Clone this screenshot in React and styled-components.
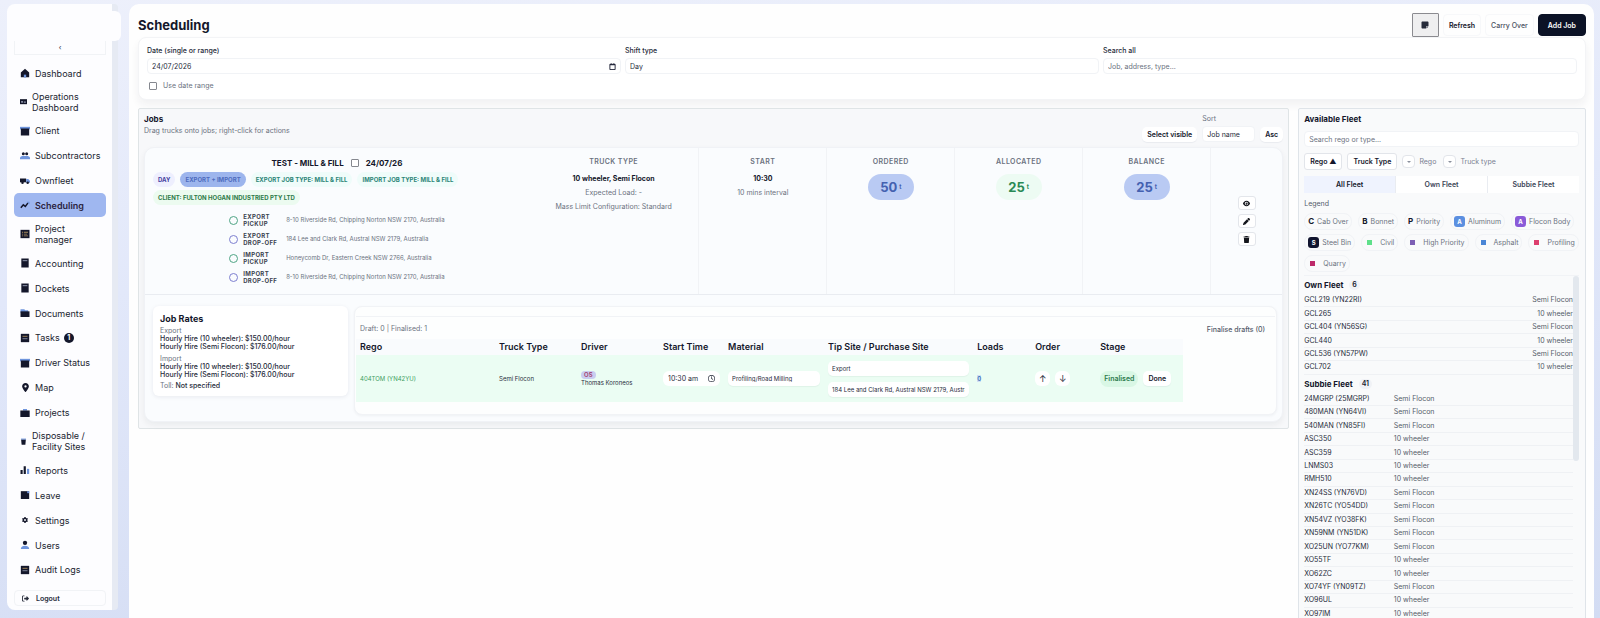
import React, { useState } from 'react';
import styled, { createGlobalStyle } from 'styled-components';
import { FaEye, FaPen, FaTrash, FaRightFromBracket, FaNoteSticky, FaRegClock, FaLocationDot, FaGear } from 'react-icons/fa6';

const COLORS = {
  ink: '#14172b',
  text: '#262b3a',
  muted: '#6b7280',
  accent: '#6f95dd',
  line: '#e9ecf1',
  lineSoft: '#f1f3f6',
  white: '#ffffff',
};

/* sidebar glyphs: each one is drawn on a 12 x 12 grid */
const GLYPHS = {
  home: <><path d="M6 1 11 5.4V11H1V5.4Z" /><path className="soft" d="M4.6 8h2.8v3.4H4.6Z" /></>,
  card: <><path d="M0 2h12v8.6H0Z" /><path className="pale" d="M2 5h3v3H2ZM6.5 5H10v1H6.5ZM6.5 7H10v1H6.5Z" /></>,
  store: <><path className="soft" d="M0 1h12v3H0Z" /><path d="M1 3h10v8.4H1Z" /></>,
  group: <><circle cx="4" cy="3.4" r="1.8" /><circle cx="8" cy="3.4" r="1.8" /><path className="soft" d="M0 8.4C0 6.6 2 6 4 6h4c2 0 4 .6 4 2.4V10H0Z" /></>,
  truck: <><path d="M0 3h7.4v4.6H0Z" /><path className="soft" d="M7.4 3.6H10L12 6V8H7.4Z" /><circle cx="3" cy="8.2" r="1.5" /><circle cx="9.2" cy="8.2" r="1.5" /></>,
  trend: <><path className="line" d="M1 9.4 4 5.8 6.4 7.6 9.6 3.4" /><path className="soft" d="M8 2h3.4v3.4Z" /></>,
  list: <><path d="M.6 1h10.8v10H.6Z" /><path className="gold" d="M2.4 3.4h1.2v1H2.4ZM4.6 3.4h5v1h-5ZM2.4 5.6h1.2v1H2.4ZM4.6 5.6h4v1h-4ZM2.4 7.8h1.2v1H2.4ZM4.6 7.8h5v1h-5Z" /></>,
  book: <><path d="M1.6.6h8.8v10.8H1.6Z" /><path className="pale" d="M3.2 2.6h5.6v1.2H3.2Z" /></>,
  folder: <><path className="soft" d="M.6 1.4h4.6l1 1.4h3.6v3H.6Z" /><path d="M.6 4h10.8v6.8H.6Z" /></>,
  tasks: <><path d="M1 1h10v10H1Z" /><path className="gold" d="M3 3.4h6v1.1H3Z" /><path className="pale" d="M3 6.4h6v1H3Z" /></>,
  case: <><path className="soft" d="M3.6 1.2h4.8v2H3.6Z" /><path d="M.4 3h11.2v7.8H.4Z" /></>,
  bin: <><path className="soft" d="M1.6 1h8.8v2H1.6Z" /><path d="M2 3h8l-.8 8.4H2.8Z" /></>,
  bars: <><path d="M.6 6h2.6v4.8H.6ZM4.4 1.4H7v9.4H4.4Z" /><path className="soft" d="M8.4 4.6H11v6.2H8.4Z" /></>,
  leave: <><path d="M1 1.4h10v9.4H1Z" /><path className="soft" d="M8.6 1.4H11v2.4H8.6Z" /></>,
  user: <><circle cx="6" cy="3.4" r="2.6" /><path className="soft" d="M1 10.8C1 8 3.4 7 6 7s5 1 5 3.8Z" /></>,
};

const Glyph = ({ name, size = 10 }) => (
  <GlyphSvg viewBox="0 0 12 12" width={size} height={size} aria-hidden="true">{GLYPHS[name]}</GlyphSvg>
);

const NAV = [
  { label: 'Dashboard', icon: 'home' },
  { label: 'Operations Dashboard', icon: 'card', wrap: true },
  { label: 'Client', icon: 'store' },
  { label: 'Subcontractors', icon: 'group' },
  { label: 'Ownfleet', icon: 'truck' },
  { label: 'Scheduling', icon: 'trend', active: true },
  { label: 'Project manager', icon: 'list' },
  { label: 'Accounting', icon: 'book' },
  { label: 'Dockets', icon: 'book' },
  { label: 'Documents', icon: 'folder' },
  { label: 'Tasks', icon: 'tasks', count: 1 },
  { label: 'Driver Status', icon: 'store' },
  { label: 'Map', icon: 'pin' },
  { label: 'Projects', icon: 'case' },
  { label: 'Disposable / Facility Sites', icon: 'bin', wrap: true },
  { label: 'Reports', icon: 'bars' },
  { label: 'Leave', icon: 'leave' },
  { label: 'Settings', icon: 'gear' },
  { label: 'Users', icon: 'user' },
  { label: 'Audit Logs', icon: 'tasks' },
];

const STOPS = [
  { type: 'Export', kind: 'Pickup', address: '8-10 Riverside Rd, Chipping Norton NSW 2170, Australia' },
  { type: 'Export', kind: 'Drop-off', address: '184 Lee and Clark Rd, Austral NSW 2179, Australia' },
  { type: 'Import', kind: 'Pickup', address: 'Honeycomb Dr, Eastern Creek NSW 2766, Australia' },
  { type: 'Import', kind: 'Drop-off', address: '8-10 Riverside Rd, Chipping Norton NSW 2170, Australia' },
];

const QUANTITIES = [
  { label: 'Ordered', value: 50, tone: 'blue' },
  { label: 'Allocated', value: 25, tone: 'green' },
  { label: 'Balance', value: 25, tone: 'blue' },
];

/* column name and its relative width */
const ALLOCATION_COLUMNS = [
  ['Rego', 139], ['Truck Type', 82], ['Driver', 82], ['Start Time', 65], ['Material', 100],
  ['Tip Site / Purchase Site', 149], ['Loads', 58], ['Order', 65], ['Stage', 87],
];
const ALLOCATION_TOTAL = ALLOCATION_COLUMNS.reduce((sum, [, width]) => sum + width, 0);

const LEGEND = [
  { letter: 'C', label: 'Cab Over' },
  { letter: 'B', label: 'Bonnet' },
  { letter: 'P', label: 'Priority' },
  { letter: 'A', label: 'Aluminum', fill: '#5b8fe0' },
  { letter: 'A', label: 'Flocon Body', fill: '#8a5ad8' },
  { letter: 'S', label: 'Steel Bin', fill: '#11152f' },
  { dot: '#5fe08a', label: 'Civil' },
  { dot: '#7d5fb4', label: 'High Priority' },
  { dot: '#4a86d6', label: 'Asphalt' },
  { dot: '#dd3f6e', label: 'Profiling' },
  { dot: '#bd2a6a', label: 'Quarry' },
];

const SEMI = 'Semi Flocon';
const TEN = '10 wheeler';

const OWN_FLEET = [
  ['GCL219 (YN22RI)', SEMI], ['GCL265', TEN], ['GCL404 (YN56SG)', SEMI],
  ['GCL440', TEN], ['GCL536 (YN57PW)', SEMI], ['GCL702', TEN],
];

const SUBBIE_FLEET = [
  ['24MGRP (25MGRP)', SEMI], ['480MAN (YN64VI)', SEMI], ['540MAN (YN85FI)', SEMI],
  ['ASC350', TEN], ['ASC359', TEN], ['LNMS03', TEN], ['RMH510', TEN],
  ['XN24SS (YN76VD)', SEMI], ['XN26TC (YO54DD)', SEMI], ['XN54VZ (YO38FK)', SEMI],
  ['XN59NM (YN51DK)', SEMI], ['XO25UN (YO77KM)', SEMI], ['XO55TF', TEN], ['XO62ZC', TEN],
  ['XO74YF (YN09TZ)', SEMI], ['XO96UL', TEN], ['XO97IM', TEN],
];

const navIcon = (item) => {
  if (item.icon === 'pin') return <FaLocationDot size={9} />;
  if (item.icon === 'gear') return <FaGear size={6} />;
  return <Glyph name={item.icon} size={item.wrap ? 7 : 10} />;
};

const Sidebar = () => (
  <Side>
    <SideBody>
      <Brand />
      <CollapseButton aria-label="Collapse menu">‹</CollapseButton>
      <Nav>
        {NAV.map((item) => (
          <NavLink key={item.label} href="#" $active={item.active}>
            <NavIcon $tight={item.wrap}>{navIcon(item)}</NavIcon>
            <span>{item.label}</span>
            {item.count && <NavCount>{item.count}</NavCount>}
          </NavLink>
        ))}
      </Nav>
      <LogoutButton><FaRightFromBracket size={7} />Logout</LogoutButton>
    </SideBody>
    <SideTrack />
  </Side>
);

const Filters = () => (
  <FilterCard>
    <Field>
      <FieldLabel htmlFor="date">Date (single or range)</FieldLabel>
      <InputBox>
        <BareInput id="date" defaultValue="24/07/2026" />
        <CalendarIcon viewBox="0 0 8 8" aria-hidden="true">
          <path d="M1 1.5h6v6H1Z" /><path d="M1 2h6M2.5.4v1.2M5.5.4v1.2" />
        </CalendarIcon>
      </InputBox>
      <CheckLabel><Check type="checkbox" />Use date range</CheckLabel>
    </Field>
    <Field>
      <FieldLabel htmlFor="shift">Shift type</FieldLabel>
      <Select id="shift"><option>Day</option><option>Night</option></Select>
    </Field>
    <Field>
      <FieldLabel htmlFor="search">Search all</FieldLabel>
      <Input id="search" placeholder="Job, address, type..." />
    </Field>
  </FilterCard>
);

const JobSummary = () => (
  <SummaryGrid>
    <JobCell>
      <JobTitle>
        <strong>TEST - MILL &amp; FILL</strong>
        <Check type="checkbox" aria-label="Select job" />
        <strong>24/07/26</strong>
      </JobTitle>
      <Pills>
        <Pill $bg="#eeeffe" $color="#4540a0">Day</Pill>
        <Pill $bg="#9db5ed" $color="#4d6bbd">Export + Import</Pill>
        <Pill $bg="#effcfa" $color="#2b8577">Export job type: Mill &amp; Fill</Pill>
        <Pill $bg="#effcfa" $color="#2b8577">Import job type: Mill &amp; Fill</Pill>
        <Pill $bg="#ecfbf0" $color="#2c7a48">Client: Fulton Hogan Industried Pty Ltd</Pill>
      </Pills>
      <Stops>
        {STOPS.map((stop, i) => (
          <Stop key={i}>
            <StopRing $drop={stop.kind === 'Drop-off'} />
            <StopLabel>{stop.type}<br />{stop.kind}</StopLabel>
            <StopAddress>{stop.address}</StopAddress>
          </Stop>
        ))}
      </Stops>
    </JobCell>
    <Cell>
      <CellHead>Truck Type</CellHead>
      <CellValue>10 wheeler, Semi Flocon</CellValue>
      <CellNote>Expected Load: -</CellNote>
      <CellNote>Mass Limit Configuration: Standard</CellNote>
    </Cell>
    <Cell>
      <CellHead>Start</CellHead>
      <CellValue>10:30</CellValue>
      <CellNote>10 mins interval</CellNote>
    </Cell>
    {QUANTITIES.map((q) => (
      <Cell key={q.label}>
        <CellHead>{q.label}</CellHead>
        <Quantity $tone={q.tone}>{q.value}<small>t</small></Quantity>
      </Cell>
    ))}
    <ActionCell>
      <IconButton aria-label="View job"><FaEye size={7} /></IconButton>
      <IconButton aria-label="Edit job"><FaPen size={7} /></IconButton>
      <IconButton aria-label="Delete job"><FaTrash size={7} /></IconButton>
    </ActionCell>
  </SummaryGrid>
);

const JobRates = () => (
  <RatesCard>
    <RatesTitle>Job Rates</RatesTitle>
    {['Export', 'Import'].map((type) => (
      <RateGroup key={type}>
        <RateType>{type}</RateType>
        <RateLine>Hourly Hire (10 wheeler): $150.00/hour</RateLine>
        <RateLine>Hourly Hire (Semi Flocon): $176.00/hour</RateLine>
      </RateGroup>
    ))}
    <RateLine><RateMuted>Toll:</RateMuted> Not specified</RateLine>
  </RatesCard>
);

const Allocations = () => (
  <AllocationCard>
    <AllocationBar>
      <span>Draft: 0 | Finalised: 1</span>
      <TextButton>Finalise drafts (0)</TextButton>
    </AllocationBar>
    <AllocationTable>
      <colgroup>
        {ALLOCATION_COLUMNS.map(([name, width]) => (
          <col key={name} style={{ width: `${(width / ALLOCATION_TOTAL) * 100}%` }} />
        ))}
      </colgroup>
      <thead>
        <tr>{ALLOCATION_COLUMNS.map(([name]) => <th key={name}>{name}</th>)}</tr>
      </thead>
      <tbody>
        <tr>
          <td><Rego>404TOM (YN42YU)</Rego></td>
          <td>Semi Flocon</td>
          <td><DriverTag>OS</DriverTag><div>Thomas Koroneos</div></td>
          <td>
            <TimeBox>
              <BareInput aria-label="Start time" defaultValue="10:30 am" />
              <FaRegClock size={7} />
            </TimeBox>
          </td>
          <td><RowSelect aria-label="Material"><option>Profiling/Road Milling</option></RowSelect></td>
          <td>
            <SiteStack>
              <RowSelect aria-label="Direction"><option>Export</option></RowSelect>
              <RowSelect aria-label="Tip site"><option>184 Lee and Clark Rd, Austral NSW 2179, Australia</option></RowSelect>
            </SiteStack>
          </td>
          <td><Loads href="#">0</Loads></td>
          <td>
            <Inline>
              <RoundButton aria-label="Move up">↑</RoundButton>
              <RoundButton aria-label="Move down">↓</RoundButton>
            </Inline>
          </td>
          <td>
            <Inline>
              <StageTag>Finalised</StageTag>
              <SmallButton>Done</SmallButton>
            </Inline>
          </td>
        </tr>
      </tbody>
    </AllocationTable>
  </AllocationCard>
);

const FleetRows = ({ rows, spread }) => (
  <FleetTable $count={rows.length}>
    <tbody>
      {rows.map(([rego, type]) => (
        <FleetRow key={rego} $spread={spread}><td>{rego}</td><td>{type}</td></FleetRow>
      ))}
    </tbody>
  </FleetTable>
);

const Fleet = () => {
  const [tab, setTab] = useState('All Fleet');

  return (
    <FleetPanel>
      <PanelTitle>Available Fleet</PanelTitle>
      <FleetSearch aria-label="Search fleet" placeholder="Search rego or type..." />
      <FleetSort>
        <OutlineButton>Rego ▲</OutlineButton>
        <OutlineButton>Truck Type</OutlineButton>
        <ToggleLabel><ToggleButton aria-label="Filter rego"><Caret /></ToggleButton>Rego</ToggleLabel>
        <ToggleLabel><ToggleButton aria-label="Filter truck type"><Caret /></ToggleButton>Truck type</ToggleLabel>
      </FleetSort>
      <Tabs>
        {['All Fleet', 'Own Fleet', 'Subbie Fleet'].map((name) => (
          <Tab key={name} $active={tab === name} onClick={() => setTab(name)}>{name}</Tab>
        ))}
      </Tabs>
      <LegendTitle>Legend</LegendTitle>
      <LegendList>
        {LEGEND.map((item) => (
          <LegendItem key={item.label}>
            {item.dot && <LegendDot $fill={item.dot} />}
            {item.letter && <LegendLetter $fill={item.fill}>{item.letter}</LegendLetter>}
            {item.label}
          </LegendItem>
        ))}
      </LegendList>
      <FleetScroll>
        <FleetLists>
          <FleetHeading>Own Fleet <FleetCount>6</FleetCount></FleetHeading>
          <FleetRows rows={OWN_FLEET} spread />
          <FleetHeading>Subbie Fleet <FleetCount>41</FleetCount></FleetHeading>
          <FleetRows rows={SUBBIE_FLEET} />
        </FleetLists>
        <ScrollThumb />
      </FleetScroll>
    </FleetPanel>
  );
};

const App = () => (
  <>
    <GlobalStyle />
    <Shell>
      <Sidebar />
      <Main>
        <TopBar>
          <Title>Scheduling</Title>
          <NoteButton aria-label="Notes"><FaNoteSticky size={8} /></NoteButton>
          <TopButton>Refresh</TopButton>
          <TopButton $light>Carry Over</TopButton>
          <TopButton $primary>Add Job</TopButton>
        </TopBar>
        <Filters />
        <Board>
          <JobsPanel>
            <JobsHeader>
              <div>
                <PanelTitle>Jobs</PanelTitle>
                <PanelNote>Drag trucks onto jobs; right-click for actions</PanelNote>
              </div>
              <JobsTools>
                <SmallButton>Select visible</SmallButton>
                <SortField>
                  <label htmlFor="sort">Sort</label>
                  <SortSelect id="sort"><option>Job name</option></SortSelect>
                </SortField>
                <SmallButton>Asc</SmallButton>
              </JobsTools>
            </JobsHeader>
            <JobCard>
              <JobSummary />
              <JobDetail>
                <JobRates />
                <Allocations />
              </JobDetail>
            </JobCard>
          </JobsPanel>
          <Fleet />
        </Board>
      </Main>
    </Shell>
  </>
);

const GlobalStyle = createGlobalStyle`
* {
box-sizing: border-box;
}
body {
margin: 0;
overflow: hidden;
font-family: Inter, "Liberation Sans", sans-serif;
font-size: 7px;
line-height: 10px;
color: ${COLORS.text};
background: linear-gradient(175deg, #edf0fb 0%, #e2e8fa 40%, #d3dcf3 100%);
}
button, input, select {
font-family: inherit;
font-size: 7px;
color: inherit;
}
a {
color: inherit;
text-decoration: none;
}
`
const Shell = styled.div`
display: flex;
gap: 8px;
height: 100vh;
padding: 4px 6px 0 7px;
`
const Side = styled.aside`
display: flex;
flex: none;
width: 114px;
margin-bottom: 8px;
`
const SideBody = styled.div`
display: flex;
flex-direction: column;
width: 105px;
padding: 7px 6px 4px 7px;
background-color: #fdfdff;
border-radius: 8px 0 0 8px;
`
const SideTrack = styled.div`
width: 6px;
background-color: #e6eaf3;
border-radius: 0 4px 4px 0;
`
/* the logo plate lies over the scroll track */
const Brand = styled.div`
position: relative;
flex: none;
width: 114px;
height: 30px;
margin-left: -7px;
background-color: #fdfdff;
border-radius: 0 6px 6px 0;
`
const CollapseButton = styled.button`
flex: none;
height: 14px;
margin-bottom: 6px;
padding: 0;
line-height: 12px;
background: none;
border: 1px solid ${COLORS.lineSoft};
border-top: none;
`
const Nav = styled.nav`
display: flex;
flex: 1;
flex-direction: column;
justify-content: space-between;
`
const NavLink = styled.a`
display: flex;
align-items: center;
gap: 5px;
min-height: 24px;
padding: 5px 6px;
font-size: 9px;
line-height: 11px;
font-weight: ${props => (props.$active ? 600 : 400)};
color: ${props => (props.$active ? '#2b2440' : '#20242f')};
background-color: ${props => (props.$active ? '#9fb7f0' : 'transparent')};
border-radius: 5px;
`
const NavIcon = styled.span`
display: flex;
flex: none;
justify-content: center;
width: ${props => (props.$tight ? '7px' : '10px')};
color: ${COLORS.ink};
`
const NavCount = styled.span`
width: 10px;
margin-left: -1px;
font-size: 7px;
line-height: 10px;
font-weight: 700;
text-align: center;
color: ${COLORS.white};
background-color: ${COLORS.ink};
border-radius: 5px;
`
const LogoutButton = styled.button`
display: flex;
flex: none;
align-items: center;
gap: 7px;
height: 16px;
margin-top: 8px;
padding: 0 7px;
font-weight: 600;
background: none;
border: 1px solid ${COLORS.lineSoft};
border-radius: 4px;
`
const GlyphSvg = styled.svg`
fill: ${COLORS.ink};

.soft { fill: ${COLORS.accent}; }
.pale { fill: #8f96ac; }
.gold { fill: #a58a5c; }
.line { fill: none; stroke: ${COLORS.ink}; stroke-width: 1.8; }
`
const Main = styled.main`
display: flex;
flex: 1;
flex-direction: column;
height: 100vh;
padding: 9px 8px 0 9px;
background-color: #fefefe;
border-radius: 10px 10px 0 0;
`
const TopBar = styled.header`
display: flex;
align-items: center;
gap: 4px;
height: 24px;
`
const Title = styled.h1`
margin: 0 auto 0 0;
font-size: 13px;
line-height: 20px;
font-weight: 700;
color: ${COLORS.ink};
`
const NoteButton = styled.button`
display: flex;
align-items: center;
justify-content: center;
width: 27px;
height: 24px;
padding: 0;
background-color: #efeff0;
border: 1px solid #8b8b90;
border-radius: 1px;
`
const TopButton = styled.button`
height: 22px;
padding: 0 ${props => (props.$primary ? '9px' : '5px')};
font-weight: ${props => (props.$light ? 500 : 600)};
color: ${props => (props.$primary ? COLORS.white : props.$light ? '#4b5160' : COLORS.ink)};
background-color: ${props => (props.$primary ? '#0b1226' : '#fefefe')};
border: 1px solid ${props => (props.$primary ? '#0b1226' : '#f7f8fa')};
border-radius: 4px;
`
const FilterCard = styled.section`
display: grid;
grid-template-columns: repeat(3, 1fr);
gap: 4px;
padding: 8px;
background-color: ${COLORS.white};
border: 1px solid #f3f4f6;
border-radius: 8px;
box-shadow: 0 5px 8px rgba(30, 40, 50, 0.06);
`
const Field = styled.div`
display: flex;
flex-direction: column;
gap: 2px;
`
const FieldLabel = styled.label`
font-weight: 500;
`
const InputBox = styled.div`
display: flex;
align-items: center;
height: 16px;
padding: 0 4px;
background-color: ${COLORS.white};
border: 1px solid ${COLORS.lineSoft};
border-radius: 4px;
`
const BareInput = styled.input`
flex: 1;
min-width: 0;
padding: 0;
background: none;
border: none;
outline: none;
`
const Input = styled.input`
width: 100%;
height: 16px;
padding: 0 4px;
background-color: ${COLORS.white};
border: 1px solid ${COLORS.lineSoft};
border-radius: 4px;

&::placeholder {
color: ${COLORS.muted};
}
`
const Select = styled.select`
appearance: none;
width: 100%;
height: 16px;
padding: 0 4px;
background-color: ${COLORS.white};
border: 1px solid ${COLORS.lineSoft};
border-radius: 4px;
`
const CalendarIcon = styled.svg`
width: 7px;
height: 7px;
fill: none;
stroke: ${COLORS.ink};
`
const CheckLabel = styled.label`
display: flex;
align-items: center;
gap: 6px;
margin-top: 5px;
padding-left: 2px;
color: ${COLORS.muted};
`
const Check = styled.input`
appearance: none;
width: 8px;
height: 8px;
margin: 0;
background-color: ${COLORS.white};
border: 1px solid #85888f;
border-radius: 1px;

&:checked {
background-color: ${COLORS.accent};
}
`
const Board = styled.div`
display: grid;
flex: 1;
grid-template-columns: 4fr 1fr;
gap: 9px;
min-height: 0;
margin-top: 8px;
`
const JobsPanel = styled.section`
align-self: start;
min-width: 0;
padding: 5px 5px 6px;
background-color: #f7f8fa;
border: 1px solid #dfe4e6;
border-radius: 2px;
`
const JobsHeader = styled.div`
display: flex;
align-items: flex-end;
justify-content: space-between;
height: 28px;
margin-bottom: 5px;
`
const PanelTitle = styled.h2`
margin: 0;
font-size: 8px;
line-height: 10px;
font-weight: 700;
color: ${COLORS.ink};
`
const PanelNote = styled.p`
margin: 2px 0 6px;
color: ${COLORS.muted};
`
const JobsTools = styled.div`
display: flex;
align-items: flex-end;
gap: 5px;
`
const SortField = styled.div`
display: flex;
flex-direction: column;
gap: 2px;
color: ${COLORS.muted};
`
const SortSelect = styled(Select)`
width: 53px;
color: ${COLORS.text};
`
const SmallButton = styled.button`
height: 15px;
padding: 0 5px;
font-weight: 600;
color: ${COLORS.ink};
background-color: ${COLORS.white};
border: none;
border-radius: 5px;
box-shadow: 0 1px 1px rgba(20, 30, 60, 0.06);
`
const JobCard = styled.article`
background-color: #fafcfe;
border: 1px solid #f0f2f6;
border-radius: 10px;
box-shadow: 0 3px 6px rgba(20, 30, 40, 0.06);
`
const SummaryGrid = styled.div`
display: grid;
grid-template-columns: 27fr 12fr 9fr 9fr 9fr 9fr 5fr;
border-bottom: 1px solid ${COLORS.line};
`
const JobCell = styled.div`
display: flex;
flex-direction: column;
align-items: center;
padding: 9px 8px 10px;
`
const JobTitle = styled.div`
display: flex;
align-items: center;
gap: 7px;
height: 12px;
font-size: 8px;
color: ${COLORS.ink};
`
const Pills = styled.div`
display: flex;
flex-wrap: wrap;
gap: 3px 5px;
width: 100%;
margin: 3px 0 8px;
`
const Pill = styled.span`
padding: 0 5px;
font-size: 6px;
line-height: 15px;
font-weight: 700;
text-transform: uppercase;
color: ${props => props.$color};
background-color: ${props => props.$bg};
border-radius: 8px;
`
const Stops = styled.div`
display: flex;
flex-direction: column;
gap: 5px;
`
const Stop = styled.div`
display: grid;
grid-template-columns: 9px 38px auto;
align-items: center;
gap: 5px;
`
const StopRing = styled.span`
width: 9px;
height: 9px;
border: 1px solid ${props => (props.$drop ? '#7d7fd0' : '#4fa585')};
border-radius: 50%;
`
const StopLabel = styled.span`
font-size: 6px;
line-height: 7px;
font-weight: 700;
letter-spacing: 0.06em;
text-transform: uppercase;
color: #3c4350;
`
const StopAddress = styled.span`
font-size: 6px;
color: ${COLORS.muted};
`
const Cell = styled.div`
display: flex;
flex-direction: column;
align-items: center;
gap: 3px;
padding-top: 8px;
border-right: 1px solid ${COLORS.lineSoft};
`
const CellHead = styled.div`
margin-bottom: 2px;
line-height: 12px;
font-weight: 600;
letter-spacing: 0.06em;
text-transform: uppercase;
color: ${COLORS.muted};
`
const CellValue = styled.div`
line-height: 11px;
font-weight: 700;
color: ${COLORS.ink};
`
const CellNote = styled.div`
line-height: 11px;
color: ${COLORS.muted};
`
const Quantity = styled.div`
display: flex;
align-items: center;
justify-content: center;
gap: 2px;
width: 46px;
height: 26px;
margin-top: 1px;
font-size: 13px;
font-weight: 700;
color: ${props => (props.$tone === 'green' ? '#2a8a55' : '#4461b0')};
background-color: ${props => (props.$tone === 'green' ? '#edfbf3' : '#b9caf3')};
border-radius: 13px;

small {
font-size: 6px;
}
`
const ActionCell = styled.div`
display: flex;
flex-direction: column;
align-items: center;
justify-content: center;
gap: 4px;
`
const IconButton = styled.button`
display: flex;
align-items: center;
justify-content: center;
width: 18px;
height: 14px;
padding: 0;
color: #14161c;
background-color: ${COLORS.white};
border: 1px solid #e3e6eb;
border-radius: 3px;
`
const JobDetail = styled.div`
display: grid;
grid-template-columns: 195px 1fr;
align-items: start;
gap: 6px;
padding: 11px 5px 6px 8px;
`
const RatesCard = styled.div`
padding: 7px 7px 6px;
background-color: ${COLORS.white};
border-radius: 6px;
box-shadow: 0 1px 4px rgba(20, 30, 60, 0.08);
`
const RatesTitle = styled.h3`
margin: 0 0 1px;
font-size: 9px;
line-height: 12px;
font-weight: 700;
color: ${COLORS.ink};
`
const RateGroup = styled.div`
margin-bottom: 3px;
`
const RateType = styled.div`
line-height: 9px;
color: ${COLORS.muted};
`
const RateLine = styled.div`
line-height: 8px;
font-weight: 500;
`
const RateMuted = styled.span`
font-weight: 400;
color: ${COLORS.muted};
`
const AllocationCard = styled.div`
min-width: 0;
padding: 9px 1px 12px;
background-color: #fdfefe;
border: 1px solid #f1f3f6;
border-radius: 8px;
box-shadow: 0 1px 3px rgba(20, 30, 60, 0.05);
`
const AllocationBar = styled.div`
display: flex;
align-items: center;
justify-content: space-between;
height: 23px;
padding: 2px 10px 0 4px;
color: ${COLORS.muted};
border-top: 1px solid ${COLORS.lineSoft};
`
const TextButton = styled.button`
padding: 0;
font-weight: 500;
color: #555b6a;
background: none;
border: none;
`
const AllocationTable = styled.table`
width: 90%;
table-layout: fixed;
border-collapse: collapse;
font-size: 6px;
line-height: 8px;

th {
height: 16px;
padding: 0 4px;
font-size: 9px;
font-weight: 600;
text-align: left;
color: ${COLORS.ink};
white-space: nowrap;
background-color: #f9fbfd;
}
td {
height: 47px;
padding: 0 4px;
white-space: nowrap;
background-color: #ebfdf3;
}
`
const Rego = styled.span`
color: #3f9f62;
`
const DriverTag = styled.span`
display: inline-block;
padding: 0 3px;
font-weight: 600;
color: #a33e6a;
background-color: #c9cdf0;
border-radius: 5px;
`
const TimeBox = styled.div`
display: flex;
align-items: center;
width: 57px;
height: 15px;
padding: 0 5px;
background-color: ${COLORS.white};
border-radius: 6px;
`
const RowSelect = styled.select`
appearance: none;
display: block;
width: 100%;
height: 15px;
padding: 0 4px;
font-size: 6px;
background-color: ${COLORS.white};
border: none;
border-radius: 5px;
box-shadow: 0 1px 1px rgba(20, 60, 40, 0.05);
`
const SiteStack = styled.div`
display: flex;
flex-direction: column;
gap: 6px;
`
const Loads = styled.a`
font-weight: 600;
color: #3b73b8;
background-color: #cfe0f5;
`
const Inline = styled.div`
display: flex;
align-items: center;
gap: 5px;
`
const RoundButton = styled.button`
width: 15px;
height: 15px;
padding: 0;
font-size: 9px;
line-height: 15px;
background-color: ${COLORS.white};
border: none;
border-radius: 6px;
`
const StageTag = styled.span`
padding: 0 4px;
font-size: 7px;
line-height: 16px;
font-weight: 600;
color: #2c7a4d;
background-color: #d9f7e5;
border-radius: 8px;
`
const FleetPanel = styled.aside`
display: flex;
flex-direction: column;
min-width: 0;
min-height: 0;
padding: 5px 6px 0 5px;
background-color: #f9fafb;
border: 1px solid #dfe4e9;
border-radius: 2px;
`
const FleetSearch = styled(Input)`
flex: none;
margin: 7px 0 6px;
`
const FleetSort = styled.div`
display: flex;
align-items: center;
gap: 5px;
`
const OutlineButton = styled.button`
height: 17px;
padding: 0 5px;
font-weight: 600;
color: ${COLORS.ink};
background-color: ${COLORS.white};
border: 1px solid #e2e5ea;
border-radius: 3px;
`
const ToggleLabel = styled.label`
display: flex;
align-items: center;
gap: 4px;
margin-right: 2px;
color: #7a8091;
`
const ToggleButton = styled.button`
display: flex;
align-items: center;
justify-content: center;
width: 13px;
height: 13px;
padding: 0;
background-color: ${COLORS.white};
border: 1px solid #e2e5ea;
border-radius: 4px;
`
const Caret = styled.span`
border: 2px solid transparent;
border-top-color: #8a8f9c;
border-bottom: none;
`
const Tabs = styled.div`
display: grid;
flex: none;
grid-template-columns: repeat(3, 1fr);
gap: 1px;
height: 17px;
margin: 6px 0;
background-color: ${COLORS.line};
border-radius: 4px;
`
const Tab = styled.button`
padding: 0;
font-weight: 600;
color: ${props => (props.$active ? COLORS.ink : '#3c4557')};
background-color: ${props => (props.$active ? '#eff3fe' : COLORS.white)};
border: none;
`
const LegendTitle = styled.div`
color: #555b6c;
`
const LegendList = styled.div`
display: flex;
flex: none;
flex-wrap: wrap;
gap: 4px 6px;
padding: 4px 0 3px;
`
const LegendItem = styled.span`
display: flex;
align-items: center;
gap: 3px;
height: 17px;
padding: 0 3px;
color: ${COLORS.muted};
border: 1px solid ${COLORS.lineSoft};
border-radius: 8px;
`
const LegendLetter = styled.b`
min-width: ${props => (props.$fill ? '11px' : '0')};
font-size: ${props => (props.$fill ? '6px' : '8px')};
line-height: 11px;
text-align: center;
color: ${props => (props.$fill ? COLORS.white : COLORS.ink)};
background-color: ${props => props.$fill || 'transparent'};
border-radius: 3px;
`
const LegendDot = styled.i`
width: 5px;
height: 5px;
margin: 0 5px 0 2px;
background-color: ${props => props.$fill};
`
const FleetScroll = styled.div`
display: flex;
flex: 1;
min-height: 0;
border-top: 1px solid ${COLORS.lineSoft};
`
const FleetLists = styled.div`
display: flex;
flex: 1;
flex-direction: column;
`
const ScrollThumb = styled.div`
width: 6px;
height: 185px;
background-color: #e3e8ee;
border-radius: 3px;
`
const FleetHeading = styled.h3`
display: flex;
align-items: center;
gap: 6px;
height: 18px;
margin: 0;
font-size: 8px;
font-weight: 700;
color: ${COLORS.ink};
`
const FleetCount = styled.span`
padding: 0 3px;
font-size: 7px;
font-weight: 600;
background-color: #f0f2f6;
border-radius: 5px;
`
const FleetTable = styled.table`
display: flex;
flex: ${props => props.$count} 1 0;
min-height: 0;

tbody {
display: flex;
flex: 1;
flex-direction: column;
}
`
const FleetRow = styled.tr`
display: grid;
flex: 1 1 0;
grid-template-columns: ${props => (props.$spread ? '1fr auto' : '1fr 2fr')};
align-items: center;
min-height: 0;
border-bottom: 1px solid #eff1f4;

td {
padding: 0;
}
td + td {
color: #555c69;
}
`

export default App
